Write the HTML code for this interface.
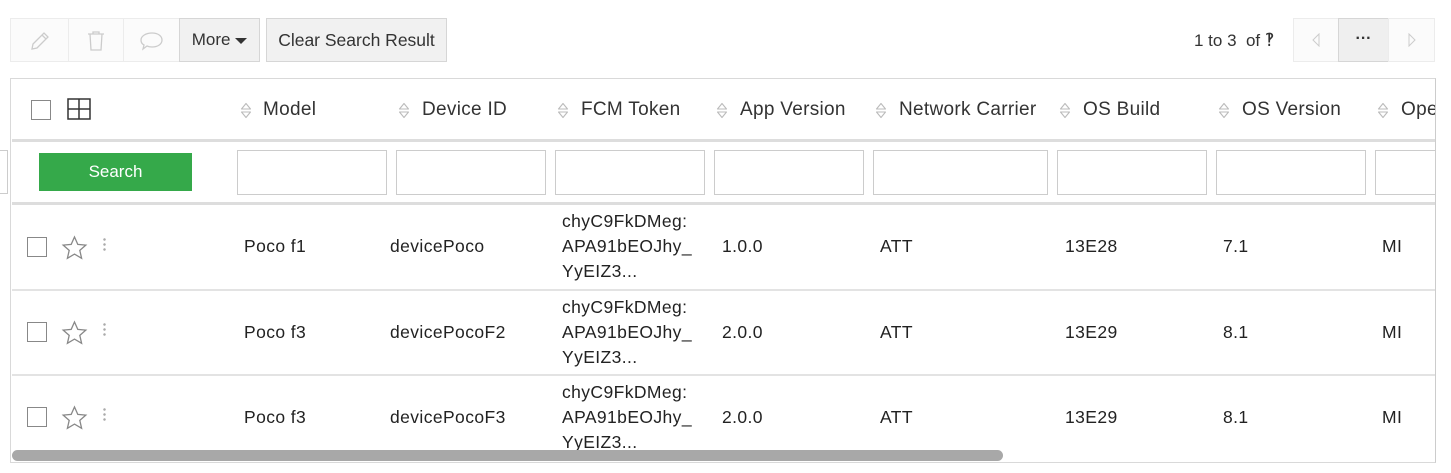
<!DOCTYPE html>
<html><head><style>
*{box-sizing:border-box;margin:0;padding:0}
body{width:1451px;height:473px;background:#fff;font-family:"Liberation Sans",sans-serif;color:#222;position:relative;overflow:hidden}
.a{position:absolute}
.btn{position:absolute;top:18px;height:44px;border:1px solid #ececec;background:#fbfbfb}
.btn2{position:absolute;top:18px;height:44px;border:1px solid #d6d6d6;background:#f1f1f1;font-size:17px;line-height:42px;color:#333;text-align:center}
.hd{position:absolute;top:99px;font-size:19px;letter-spacing:.3px;color:#333}
.si{position:absolute;top:101px;width:12px;height:18px}
.inp{position:absolute;top:150px;height:45px;border:1px solid #ccc;background:#fff}
.cb{position:absolute;width:20px;height:20px;border:1px solid #888;background:#fff}
.t{position:absolute;font-size:17.5px;letter-spacing:.4px;color:#222;line-height:25px}
.hl{position:absolute;left:12px;width:1423px;background:#ddd}
.dots{position:absolute;left:103px;width:3px;height:14px;background:radial-gradient(circle,#aaa 1px,transparent 1.5px) 0 0/3px 5px}
</style></head><body>
<div class="btn" style="left:10px;width:59px"><svg class="a" style="left:17px;top:10px" width="24" height="24" viewBox="0 0 24 24" fill="none" stroke="#ccc" stroke-width="1.3"><path d="M4 20l1-5L16 4l4 4L9 19z M14 6l4 4"/></svg></div>
<div class="btn" style="left:68px;width:56px"><svg class="a" style="left:16px;top:10px" width="22" height="24" viewBox="0 0 22 24" fill="none" stroke="#ccc" stroke-width="1.3"><path d="M3 5h16M8 5V3h6v2M5 5l1 16h10l1-16"/></svg></div>
<div class="btn" style="left:123px;width:57px"><svg class="a" style="left:15px;top:11px" width="26" height="22" viewBox="0 0 26 22" fill="none" stroke="#ccc" stroke-width="1.3"><path d="M13 3c6 0 10 3 10 7s-4 7-10 7c-2 0-3 0-5-1l-4 3 1-4c-2-1-3-3-3-5 0-4 5-7 11-7z"/></svg></div>
<div class="btn2" style="left:179px;width:81px">More <span style="display:inline-block;width:0;height:0;border-left:6px solid transparent;border-right:6px solid transparent;border-top:6px solid #333;vertical-align:middle"></span></div>
<div class="btn2" style="left:266px;width:181px;font-size:17.5px">Clear Search Result</div>
<div class="a" style="left:1194px;top:30px;font-size:17px;color:#333">1 to 3 &nbsp;of <span style="font-size:18px">&#8253;</span></div>
<div class="btn" style="left:1293px;width:46px"><svg class="a" style="left:17px;top:14px" width="10" height="14"><path d="M8 1L2 7l6 6z" fill="none" stroke="#ccc"/></svg></div>
<div class="btn" style="left:1338px;width:51px;background:#efefef;border-color:#d6d6d6;text-align:center;line-height:40px;font-size:16px;color:#333;font-weight:bold">···</div>
<div class="btn" style="left:1388px;width:47px"><svg class="a" style="left:18px;top:14px" width="10" height="14"><path d="M2 1l6 6-6 6z" fill="none" stroke="#ccc"/></svg></div>

<div class="a" style="left:10px;top:78px;width:1426px;height:385px;border:1px solid #d9d9d9;border-right:1px solid #ccc"></div>
<div class="hl" style="top:139px;height:3px"></div>
<div class="hl" style="top:202px;height:3px"></div>
<div class="hl" style="top:289px;height:2px;background:#e3e3e3"></div>
<div class="hl" style="top:374px;height:2px;background:#e3e3e3"></div>
<div class="a" style="left:0;top:150px;width:8px;height:44px;border:1px solid #ccc;border-left:none"></div>

<div class="cb" style="left:31px;top:100px"></div>
<svg class="a" style="left:67px;top:98px" width="24" height="22"><rect x="1" y="1" width="22" height="20" fill="none" stroke="#333" stroke-width="1.5"/><path d="M12 1v20M1 11h22" stroke="#333" stroke-width="1.5"/></svg>

<svg width="0" height="0" style="position:absolute"><defs><g id="s"><path d="M1.5 8L6 2.5l4.5 5.5zM1.5 11L6 16.5l4.5-5.5z" fill="none" stroke="#bbb" stroke-width="1.1" stroke-linejoin="round"/></g></defs></svg>
<svg class="si" style="left:240px"><use href="#s"/></svg><div class="hd" style="left:263px">Model</div>
<svg class="si" style="left:398px"><use href="#s"/></svg><div class="hd" style="left:422px">Device ID</div>
<svg class="si" style="left:557px"><use href="#s"/></svg><div class="hd" style="left:581px">FCM Token</div>
<svg class="si" style="left:716px"><use href="#s"/></svg><div class="hd" style="left:740px">App Version</div>
<svg class="si" style="left:875px"><use href="#s"/></svg><div class="hd" style="left:899px">Network Carrier</div>
<svg class="si" style="left:1059px"><use href="#s"/></svg><div class="hd" style="left:1083px">OS Build</div>
<svg class="si" style="left:1218px"><use href="#s"/></svg><div class="hd" style="left:1242px">OS Version</div>
<svg class="si" style="left:1377px"><use href="#s"/></svg><div class="hd" style="left:1401px;width:34px;overflow:hidden;white-space:nowrap">Operator</div>

<div class="a" style="left:39px;top:153px;width:153px;height:38px;background:#35a94a;color:#fff;font-size:17px;text-align:center;line-height:38px">Search</div>
<div class="inp" style="left:237px;width:150px"></div>
<div class="inp" style="left:396px;width:150px"></div>
<div class="inp" style="left:555px;width:150px"></div>
<div class="inp" style="left:714px;width:150px"></div>
<div class="inp" style="left:873px;width:175px"></div>
<div class="inp" style="left:1057px;width:150px"></div>
<div class="inp" style="left:1216px;width:150px"></div>
<div class="inp" style="left:1375px;width:60px;border-right:none"></div>

<div class="cb" style="left:27px;top:237px"></div>
<svg class="a" style="left:61px;top:235px" width="27" height="26"><path d="M13.5 2l3.3 7.4 8 .7-6 5.3 1.8 7.9-7.1-4.2-7.1 4.2 1.8-7.9-6-5.3 8-.7z" fill="none" stroke="#888" stroke-width="1.3"/></svg>
<div class="dots" style="top:237px"></div>
<div class="t" style="left:244px;top:234px">Poco f1</div><div class="t" style="left:390px;top:234px">devicePoco</div>
<div class="t" style="left:562px;top:209px">chyC9FkDMeg:<br>APA91bEOJhy_<br>YyEIZ3...</div>
<div class="t" style="left:722px;top:234px">1.0.0</div><div class="t" style="left:880px;top:234px">ATT</div>
<div class="t" style="left:1065px;top:234px">13E28</div><div class="t" style="left:1223px;top:234px">7.1</div><div class="t" style="left:1382px;top:234px">MI</div>

<div class="cb" style="left:27px;top:322px"></div>
<svg class="a" style="left:61px;top:320px" width="27" height="26"><path d="M13.5 2l3.3 7.4 8 .7-6 5.3 1.8 7.9-7.1-4.2-7.1 4.2 1.8-7.9-6-5.3 8-.7z" fill="none" stroke="#888" stroke-width="1.3"/></svg>
<div class="dots" style="top:322px"></div>
<div class="t" style="left:244px;top:320px">Poco f3</div><div class="t" style="left:390px;top:320px">devicePocoF2</div>
<div class="t" style="left:562px;top:295px">chyC9FkDMeg:<br>APA91bEOJhy_<br>YyEIZ3...</div>
<div class="t" style="left:722px;top:320px">2.0.0</div><div class="t" style="left:880px;top:320px">ATT</div>
<div class="t" style="left:1065px;top:320px">13E29</div><div class="t" style="left:1223px;top:320px">8.1</div><div class="t" style="left:1382px;top:320px">MI</div>

<div class="cb" style="left:27px;top:407px"></div>
<svg class="a" style="left:61px;top:405px" width="27" height="26"><path d="M13.5 2l3.3 7.4 8 .7-6 5.3 1.8 7.9-7.1-4.2-7.1 4.2 1.8-7.9-6-5.3 8-.7z" fill="none" stroke="#888" stroke-width="1.3"/></svg>
<div class="dots" style="top:407px"></div>
<div class="t" style="left:244px;top:405px">Poco f3</div><div class="t" style="left:390px;top:405px">devicePocoF3</div>
<div class="t" style="left:562px;top:380px;height:70px;overflow:hidden">chyC9FkDMeg:<br>APA91bEOJhy_<br>YyEIZ3...</div>
<div class="t" style="left:722px;top:405px">2.0.0</div><div class="t" style="left:880px;top:405px">ATT</div>
<div class="t" style="left:1065px;top:405px">13E29</div><div class="t" style="left:1223px;top:405px">8.1</div><div class="t" style="left:1382px;top:405px">MI</div>

<div class="a" style="left:11px;top:450px;width:1424px;height:12px;background:#fff"></div>
<div class="a" style="left:12px;top:450px;width:991px;height:11px;background:#a8a8a8;border-radius:6px"></div>
</body></html>
